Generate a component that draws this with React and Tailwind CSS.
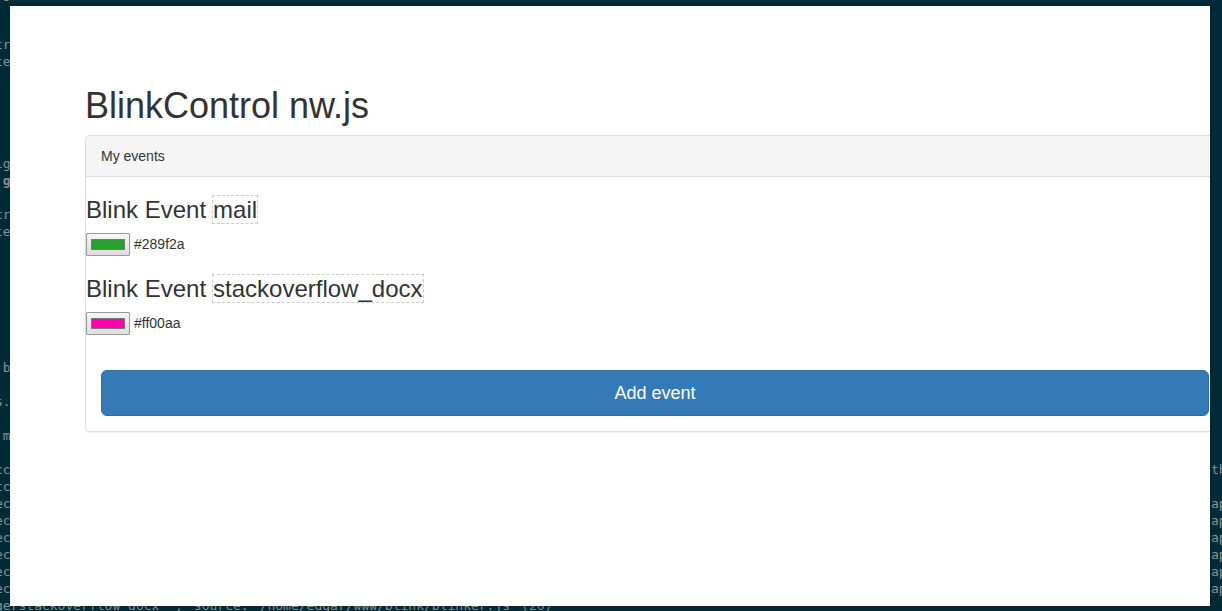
import { useState } from "react";

const terminalRows = [
  { left: " g" },
  {},
  {},
  { left: "tr" },
  { left: "te" },
  {},
  {},
  {},
  {},
  {},
  { left: "ig" },
  { left: " g", bold: true },
  {},
  { left: "tr" },
  { left: "te" },
  {},
  {},
  {},
  {},
  {},
  {},
  {},
  { left: " b" },
  {},
  { left: "s." },
  {},
  { left: " m" },
  {},
  { left: "cc", right: "th" },
  { left: "tc" },
  { left: "ec", right: "ap" },
  { left: "ec", right: "ap" },
  { left: "ec", right: "ap" },
  { left: "ec", right: "ap" },
  { left: "ec", right: "ap" },
  { left: "ec", right: "ap" },
];

const lastLine = ['gerstackoverflow_docx"",', "source:", "/home/edgar/www/blink/blinker.js", "(20)"];

function Terminal() {
  return (
    <div
      aria-hidden="true"
      className="absolute inset-0 overflow-hidden bg-[#002b36] font-['DejaVu_Sans_Mono',monospace] text-[13px] leading-[17px] text-[#839496]"
    >
      <div className="-mt-[15px] -ml-[5px] flex flex-col">
        {terminalRows.map((row, i) => (
          <div key={i} className="flex h-[17px] justify-between whitespace-pre">
            <span className={row.bold ? "font-bold" : ""}>{row.left}</span>
            <span className="w-[11px]">{row.right}</span>
          </div>
        ))}
        <div className="flex h-[17px] gap-[11px] whitespace-pre">
          {lastLine.map((word) => (
            <span key={word}>{word}</span>
          ))}
        </div>
      </div>
    </div>
  );
}

function BlinkEvent({ id, initialName, initialColor }) {
  const [name, setName] = useState(initialName);
  const [color, setColor] = useState(initialColor);
  return (
    <section>
      <h3 className="mt-[18px] mb-[9px] flex h-[29px] items-center gap-[6px] text-[24px] leading-[26px]">
        <label htmlFor={`name-${id}`}>Blink Event</label>
        <input
          id={`name-${id}`}
          type="text"
          value={name}
          onChange={(e) => setName(e.target.value)}
          className="h-[29px] [field-sizing:content] border border-dashed border-[#ccc] bg-transparent p-0 outline-none"
        />
      </h3>
      <div className="flex h-[23px] items-start gap-1">
        <input
          id={`color-${id}`}
          type="color"
          value={color}
          onChange={(e) => setColor(e.target.value)}
          className="h-[23px] w-[44px] appearance-none rounded-[1px] border border-[#999] bg-linear-to-b from-[#f6f6f6] to-[#dddddd] px-[4px] py-[5px] [&::-webkit-color-swatch]:rounded-none [&::-webkit-color-swatch]:border [&::-webkit-color-swatch]:border-solid [&::-webkit-color-swatch]:border-[#777] [&::-webkit-color-swatch-wrapper]:p-0"
        />
        <label htmlFor={`color-${id}`} className="leading-[22px]">
          {color}
        </label>
      </div>
    </section>
  );
}

export default function App() {
  const [events, setEvents] = useState([
    { name: "mail", color: "#289f2a" },
    { name: "stackoverflow_docx", color: "#ff00aa" },
  ]);

  return (
    <div className="relative flex min-h-screen flex-col pt-[6px] pr-[12px] pb-[5px] pl-[10px]">
      <Terminal />
      <main className="relative flex-1 overflow-hidden bg-white pt-[79px] pb-10 pl-[75px] font-['Liberation_Sans',Arial,sans-serif] text-[14px] leading-5 text-[#333] shadow-[0_0_4px_rgba(0,0,0,0.2)]">
        <h1 className="mb-2 text-[36px] leading-[42px]">BlinkControl nw.js</h1>
        <div className="-mr-[15px] rounded-[4px] border border-[#ddd] shadow-[0_1px_1px_rgba(0,0,0,0.05)]">
          <div className="rounded-t-[3px] border-b border-[#ddd] bg-[#f5f5f5] px-[15px] py-[10px]">
            My events
          </div>
          {events.map((event, i) => (
            <BlinkEvent key={i} id={i} initialName={event.name} initialColor={event.color} />
          ))}
          <div className="mt-5 p-[15px]">
            <button
              type="button"
              onClick={() => setEvents([...events, { name: "event", color: "#337ab7" }])}
              className="h-[46px] w-full rounded-[6px] border border-[#2e6da4] bg-[#337ab7] text-[18px] leading-6 text-white"
            >
              Add event
            </button>
          </div>
        </div>
      </main>
    </div>
  );
}
